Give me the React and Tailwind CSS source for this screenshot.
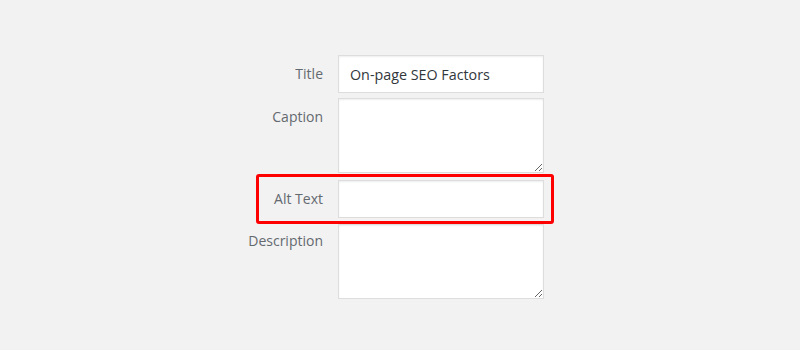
export default function App() {
  const label = "text-right text-[14px] leading-[38px] text-[#646970]";
  const input =
    "block w-[206px] h-[38px] border border-[#dddddd] bg-white px-[11px] text-[14.3px] text-[#32373c] outline-none shadow-[inset_0_1px_2px_rgba(0,0,0,0.07)]";
  const area =
    "block w-[206px] h-[75px] border border-[#dddddd] bg-white px-[11px] py-[6px] text-[14px] text-[#32373c] outline-none shadow-[inset_0_1px_2px_rgba(0,0,0,0.07)] resize-y";
  return (
    <div
      className="w-[800px] h-[350px] bg-[#f2f2f2] pt-[55px] pl-[223px]"
      style={{ fontFamily: '"Open Sans", "Noto Sans", sans-serif' }}
    >
      <div className="grid grid-cols-[100px_206px] gap-x-[15px]">
        <div className={label}>Title</div>
        <input className={input} defaultValue="On-page SEO Factors" />

        <div className={`${label} mt-[5px]`}>Caption</div>
        <textarea className={`${area} mt-[5px]`} />

        <div className={`${label} mt-[7px]`}>Alt Text</div>
        <div className="relative mt-[7px]">
          <input className={input} defaultValue="" />
          <div className="pointer-events-none absolute left-[-82px] top-[-6px] w-[298px] h-[50px] rounded-[3px] border-[3px] border-[#ff0000] z-10" />
        </div>

        <div className={`${label} mt-[4px]`}>Description</div>
        <textarea className={`${area} mt-[6px]`} />
      </div>
    </div>
  );
}
